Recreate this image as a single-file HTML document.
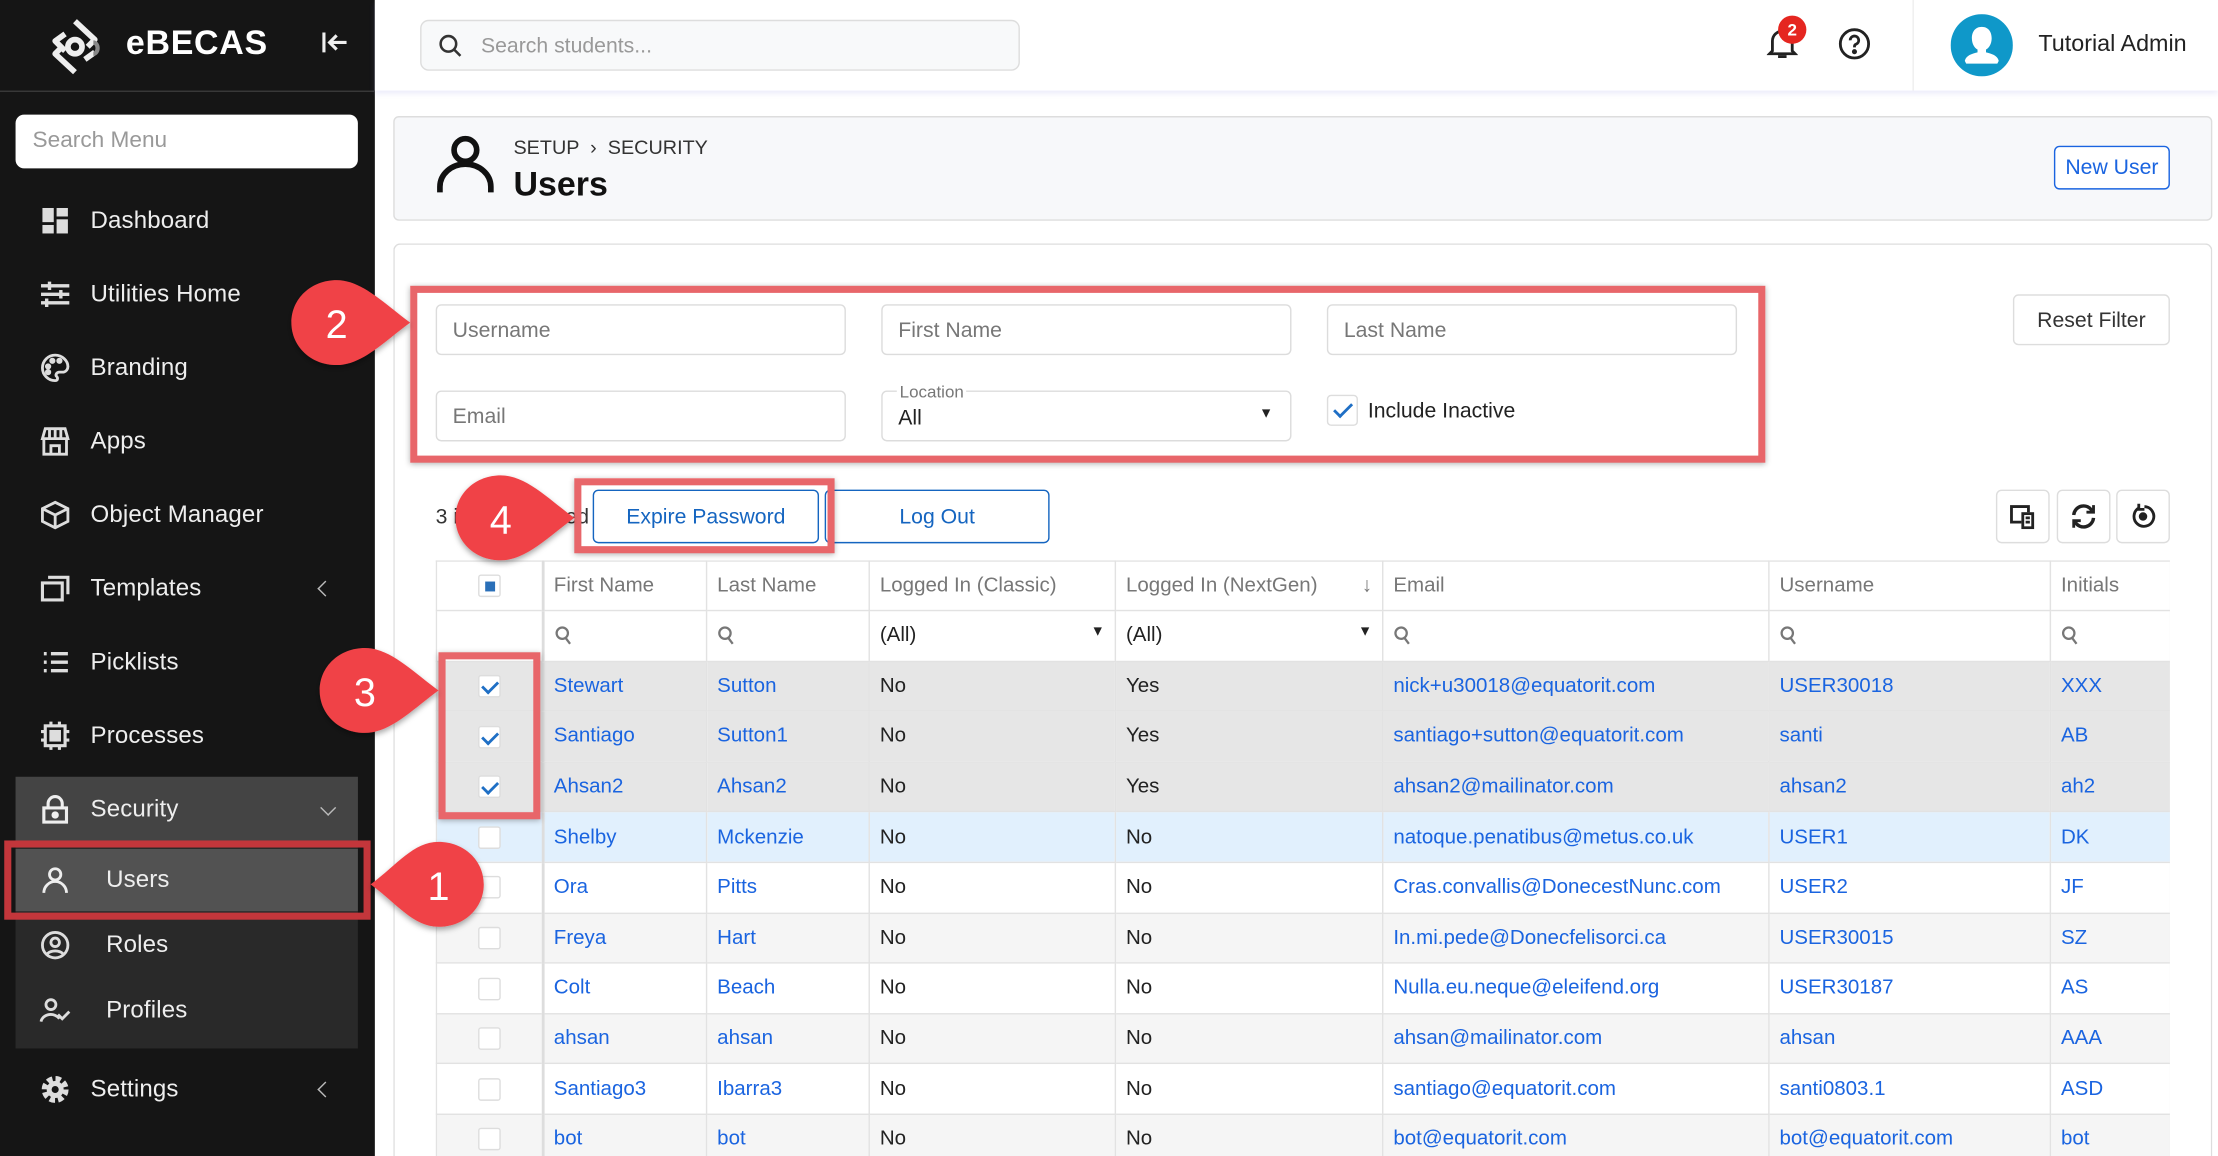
<!DOCTYPE html>
<html><head><meta charset="utf-8">
<style>
*{box-sizing:border-box;margin:0;padding:0}
html,body{width:2218px;height:1156px;overflow:hidden;background:#fff}
#w{position:relative;width:2218px;height:1156px;overflow:hidden}
#s{position:absolute;left:0;top:0;width:1568px;height:817px;overflow:hidden;transform:scale(1.41454,1.41493);transform-origin:0 0;font-family:"Liberation Sans",sans-serif;color:#222}
.a{position:absolute}
.side{left:0;top:0;width:265px;height:817px;background:#151515}
.mi{position:absolute;left:28px;height:24px;display:flex;align-items:center;color:#eee;font-size:17px;letter-spacing:.1px}
.mi svg{width:22px;height:22px;margin-right:14px;flex:none}
.chev{position:absolute;left:226px;width:8px;height:8px;border-left:1.5px solid #bbb;border-bottom:1.5px solid #bbb;transform:rotate(45deg)}
.inp{position:absolute;border:1px solid #dcdcdc;border-radius:4px;height:36px;background:#fff;color:#777;font-size:15px;padding:9px 11px}
.btn{position:absolute;border:1px solid #1565c0;border-radius:4px;color:#1565c0;font-size:15px;display:flex;align-items:center;justify-content:center;background:#fff}
.gb{position:absolute;border:1px solid #ddd;border-radius:4px;background:#fff;display:flex;align-items:center;justify-content:center}
.red{position:absolute;border:5px solid #e8666a;box-shadow:0 1px 4px rgba(0,0,0,.3)}
#tw{position:absolute;left:308px;top:396px;width:1226px;height:421px;overflow:hidden}
table{border-collapse:collapse;font-size:14.5px;width:1226px;table-layout:fixed}
td{border:1px solid #e2e2e2;height:35.6px;padding:0 7px;white-space:nowrap;overflow:hidden}
th{border:1px solid #e2e2e2;height:35px;padding:0 7px;text-align:left;font-weight:normal;color:#777}
td.c{text-align:center;border-right:2px solid #ddd;padding:0}
tr.sel td{background:#e6e6e6}
tr.hl td{background:#e1f0fd}
tr.z td{background:#f5f5f5}
.l{color:#1a64e0}
.cb{display:inline-block;width:16px;height:16px;border:1px solid #ddd;border-radius:2px;background:#fff;vertical-align:middle;position:relative}
.cb.k::after{content:"";position:absolute;left:4px;top:1px;width:5px;height:9px;border:solid #1f6fc5;border-width:0 2px 2px 0;transform:rotate(45deg)}
.mg{display:inline-block;width:12px;height:14px;vertical-align:middle}
</style></head><body><div id="w"><div id="s">
<div class="a side"></div>
<svg class="a" style="left:32px;top:12px" width="42" height="42" viewBox="0 0 42 42"><g fill="none" stroke="#eee" stroke-width="4" stroke-linejoin="round"><path d="M21 3 L35 16 L30 21"/><path d="M21 39 L7 26 L12 21"/><path d="M14 12 L7 17 L14 24"/><path d="M28 30 L35 25"/><circle cx="21" cy="21" r="5"/></g><path d="M34 18 a3 4 0 0 1 0 8" stroke="#888" stroke-width="3" fill="none"/></svg>
<div class="a" style="left:89px;top:17px;color:#fff;font-size:24px;font-weight:bold;letter-spacing:.5px">eBECAS</div>
<svg class="a" style="left:227px;top:21px" width="20" height="18" viewBox="0 0 20 18" fill="none" stroke="#eee" stroke-width="2.2"><path d="M2 2V16M18 9H7M11 4L6 9L11 14"/></svg>
<div class="a" style="left:0;top:64px;width:265px;height:1px;background:#3a3a3a"></div>
<div class="a" style="left:11px;top:81px;width:242px;height:38px;background:#fff;border-radius:6px;color:#999;font-size:16px;padding:10px 12px">Search Menu</div>
<div class="a" style="left:11px;top:549px;width:242px;height:192px;background:#292929"></div>
<div class="a" style="left:11px;top:549px;width:242px;height:49px;background:#444"></div>
<div class="a" style="left:11px;top:600px;width:242px;height:44px;background:#525252"></div>
<div class="a" style="left:3px;top:594px;width:259px;height:56px;border:5px solid #c3363b"></div>
<div class="mi" style="top:144px"><svg viewBox="0 0 22 22" fill="#ddd"><rect x="2" y="2" width="8" height="10"/><rect x="12" y="2" width="8" height="6"/><rect x="2" y="14" width="8" height="6"/><rect x="12" y="10" width="8" height="10"/></svg>Dashboard</div>
<div class="mi" style="top:196px"><svg viewBox="0 0 22 22" stroke="#ddd" stroke-width="2.4"><path d="M1 5H21M1 11H21M1 17H21M7 2V8M15 8V14M5 14V20"/></svg>Utilities Home</div>
<div class="mi" style="top:248px"><svg viewBox="0 0 22 22" fill="none" stroke="#ddd" stroke-width="2"><path d="M11 2a9 9 0 1 0 0 18c2 0 2-2 1-3s0-3 2-3h3a4 4 0 0 0 3-4c0-4-4-8-9-8z"/><circle cx="6" cy="10" r="1.2" fill="#ddd"/><circle cx="9" cy="6" r="1.2" fill="#ddd"/><circle cx="14" cy="6" r="1.2" fill="#ddd"/><circle cx="6" cy="14" r="1.2" fill="#ddd"/></svg>Branding</div>
<div class="mi" style="top:300px"><svg viewBox="0 0 22 22" fill="none" stroke="#ddd" stroke-width="2"><path d="M3 9V20H19V9M2 9L4 2H18L20 9ZM8 20V14H14V20M7 2V9M15 2V9M11 2V9"/></svg>Apps</div>
<div class="mi" style="top:352px"><svg viewBox="0 0 22 22" fill="none" stroke="#ddd" stroke-width="2"><path d="M11 2L20 6.5V15.5L11 20L2 15.5V6.5ZM2 6.5L11 11L20 6.5M11 11V20"/></svg>Object Manager</div>
<div class="mi" style="top:404px"><svg viewBox="0 0 22 22" fill="none" stroke="#ddd" stroke-width="2.2"><rect x="2" y="7" width="14" height="12"/><path d="M6 3H20V15"/></svg>Templates</div><div class="chev" style="top:412px"></div>
<div class="mi" style="top:456px"><svg viewBox="0 0 22 22" stroke="#ddd" stroke-width="2.4"><path d="M3 5H5M8 5H20M3 11H5M8 11H20M3 17H5M8 17H20"/></svg>Picklists</div>
<div class="mi" style="top:508px"><svg viewBox="0 0 22 22" fill="none" stroke="#ddd" stroke-width="2.2"><rect x="4" y="4" width="14" height="14"/><rect x="8" y="8" width="6" height="6" fill="#ddd"/><path d="M8 1V4M14 1V4M8 18V21M14 18V21M1 8H4M1 14H4M18 8H21M18 14H21"/></svg>Processes</div>
<div class="mi" style="top:560px"><svg viewBox="0 0 22 22" fill="none" stroke="#eee" stroke-width="2.2"><rect x="3" y="10" width="16" height="10"/><path d="M6 10V7a5 5 0 0 1 10 0v3"/><circle cx="11" cy="15" r="1.5" fill="#eee"/></svg>Security</div><div class="chev" style="top:567px;left:228px;transform:rotate(-45deg)"></div>
<div class="mi" style="top:610px"><svg viewBox="0 0 22 22" fill="none" stroke="#eee" stroke-width="2"><circle cx="11" cy="7" r="4"/><path d="M3 20a8 8 0 0 1 16 0"/></svg><span style="margin-left:11px">Users</span></div>
<div class="mi" style="top:656px"><svg viewBox="0 0 22 22" fill="none" stroke="#ddd" stroke-width="2"><circle cx="11" cy="11" r="9"/><circle cx="11" cy="9" r="3"/><path d="M5.5 17a7 5 0 0 1 11 0"/></svg><span style="margin-left:11px">Roles</span></div>
<div class="mi" style="top:702px"><svg viewBox="0 0 22 22" fill="none" stroke="#ddd" stroke-width="2"><circle cx="8" cy="7" r="3.5"/><path d="M1 19a7 6 0 0 1 13-2M13 14l3 3 5-5"/></svg><span style="margin-left:11px">Profiles</span></div>
<div class="mi" style="top:758px"><svg viewBox="0 0 22 22"><circle cx="11" cy="11" r="7" fill="none" stroke="#ddd" stroke-width="5" stroke-dasharray="3.5 2"/><circle cx="11" cy="11" r="6" fill="#ddd"/><circle cx="11" cy="11" r="2.5" fill="#151515"/></svg>Settings</div><div class="chev" style="top:766px"></div>

<div class="a" style="left:265px;top:0;width:1303px;height:64px;background:#fff;box-shadow:0 2px 4px rgba(120,120,220,.15)"></div>
<div class="a" style="left:297px;top:14px;width:424px;height:36px;background:#f8f9fa;border:1px solid #ddd;border-radius:6px"></div>
<svg class="a" style="left:310px;top:24px" width="17" height="17" viewBox="0 0 17 17" fill="none" stroke="#333" stroke-width="1.8"><circle cx="7" cy="7" r="5.5"/><path d="M11 11L15.5 15.5"/></svg>
<div class="a" style="left:340px;top:24px;color:#999;font-size:15px">Search students...</div>
<svg class="a" style="left:1249px;top:19px" width="22" height="24" viewBox="0 0 22 24" fill="none" stroke="#222" stroke-width="2"><path d="M4 17V10a7 7 0 0 1 14 0v7l2 2H2z"/><path d="M8 21h6"/></svg>
<div class="a" style="left:1257px;top:11px;width:20px;height:20px;border-radius:50%;background:#e52620;color:#fff;font-size:12px;font-weight:bold;text-align:center;line-height:20px">2</div>
<svg class="a" style="left:1299px;top:19px" width="24" height="24" viewBox="0 0 24 24" fill="none" stroke="#222" stroke-width="2"><circle cx="12" cy="12" r="10"/><path d="M9 9.5a3 3 0 1 1 4 2.8c-1 .4-1 1-1 2.2"/><circle cx="12" cy="17.5" r=".8" fill="#222"/></svg>
<div class="a" style="left:1352px;top:0;width:1px;height:64px;background:#eee"></div>
<svg class="a" style="left:1379px;top:10px" width="44" height="44" viewBox="0 0 44 44"><circle cx="22" cy="22" r="22" fill="#0f98c9"/><path d="M22 9c5 0 7 4 7 8s-2 7-4 8v2c4 1 8 2 9 6l-1 2H11l-1-2c1-4 5-5 9-6v-2c-2-1-4-4-4-8s2-8 7-8z" fill="#fff"/></svg>
<div class="a" style="left:1441px;top:22px;font-size:16.5px;color:#222">Tutorial Admin</div>

<div class="a" style="left:278px;top:82px;width:1286px;height:74px;background:#f7f8fa;border:1px solid #ddd;border-radius:4px"></div>
<svg class="a" style="left:308px;top:94px" width="42" height="44" viewBox="0 0 42 44" fill="none" stroke="#111" stroke-width="4"><circle cx="21" cy="12" r="8"/><path d="M3 42V38a18 16 0 0 1 36 0v4"/></svg>
<div class="a" style="left:363px;top:96px;font-size:14px;color:#333">SETUP &nbsp;›&nbsp; SECURITY</div>
<div class="a" style="left:363px;top:117px;font-size:24px;font-weight:bold;color:#111">Users</div>
<div class="btn" style="left:1452px;top:103px;width:82px;height:31px;color:#1a64e0;border-color:#1a64e0">New User</div>

<div class="a" style="left:278px;top:172px;width:1286px;height:645px;background:#fff;border:1px solid #ddd;border-bottom:none;border-radius:5px 5px 0 0"></div>
<div class="inp" style="left:308px;top:215px;width:290px">Username</div>
<div class="inp" style="left:623px;top:215px;width:290px">First Name</div>
<div class="inp" style="left:938px;top:215px;width:290px">Last Name</div>
<div class="inp" style="left:308px;top:276px;width:290px">Email</div>
<div class="inp" style="left:623px;top:276px;width:290px;color:#222;padding-top:10px">All<span style="position:absolute;left:10px;top:-7px;background:#fff;font-size:12px;color:#777;padding:0 2px">Location</span><span style="position:absolute;right:12px;top:10px;font-size:10px">▼</span></div>
<div class="a" style="left:938px;top:279px;width:22px;height:22px;border:1px solid #ddd;border-radius:3px"></div>
<div class="a" style="left:946px;top:282px;width:7px;height:13px;border:solid #1f6fc5;border-width:0 2px 2px 0;transform:rotate(45deg)"></div>
<div class="a" style="left:967px;top:282px;font-size:15px;color:#222">Include Inactive</div>
<div class="gb" style="left:1423px;top:208px;width:111px;height:36px;font-size:15px;color:#333">Reset Filter</div>
<div class="red" style="left:290px;top:202px;width:958px;height:125px"></div>

<div class="a" style="left:308px;top:357px;font-size:15px;color:#333">3 items selected</div>
<div class="btn" style="left:419px;top:346px;width:160px;height:38px">Expire Password</div>
<div class="btn" style="left:583px;top:346px;width:159px;height:38px">Log Out</div>
<div class="red" style="left:406px;top:338px;width:184px;height:53px"></div>
<div class="gb" style="left:1411px;top:346px;width:38px;height:38px"><svg width="20" height="18" viewBox="0 0 20 18" fill="none" stroke="#222" stroke-width="2"><path d="M9 13H2V2H14V6"/><rect x="10" y="7" width="7" height="10"/><path d="M12 10h3M12 13h3"/></svg></div>
<div class="gb" style="left:1454px;top:346px;width:38px;height:38px"><svg width="20" height="20" viewBox="0 0 20 20" fill="none" stroke="#222" stroke-width="2.4"><path d="M3 9a7 7 0 0 1 13-3M17 11a7 7 0 0 1-13 3"/><path d="M17 2v5h-5M3 18v-5h5" stroke-width="2"/></svg></div>
<div class="gb" style="left:1496px;top:346px;width:38px;height:38px"><svg width="20" height="20" viewBox="0 0 20 20" fill="none" stroke="#222" stroke-width="2"><path d="M7 4a7 7 0 1 0 4-1"/><path d="M7 1v4h4"/><circle cx="10" cy="10" r="2" fill="#222"/></svg></div>

<div id="tw"><table>
<colgroup><col style="width:75px"><col style="width:116px"><col style="width:115px"><col style="width:174px"><col style="width:189px"><col style="width:273px"><col style="width:199px"><col style="width:85px"></colgroup>
<tr><th style="text-align:center;border-right:2px solid #ddd"><span class="cb"><span style="position:absolute;left:4px;top:4px;width:7px;height:7px;background:#2a6fb8"></span></span></th><th>First Name</th><th>Last Name</th><th>Logged In (Classic)</th><th>Logged In (NextGen)<span style="float:right;color:#777">↓</span></th><th>Email</th><th>Username</th><th>Initials</th></tr>
<tr style="color:#777"><td class="c"></td><td><svg class="mg" viewBox="0 0 12 14" fill="none" stroke="#777" stroke-width="1.6"><circle cx="5.5" cy="5.5" r="4"/><path d="M8 9l3 4"/></svg></td><td><svg class="mg" viewBox="0 0 12 14" fill="none" stroke="#777" stroke-width="1.6"><circle cx="5.5" cy="5.5" r="4"/><path d="M8 9l3 4"/></svg></td><td style="color:#222">(All)<span style="float:right;font-size:10px">▼</span></td><td style="color:#222">(All)<span style="float:right;font-size:10px">▼</span></td><td><svg class="mg" viewBox="0 0 12 14" fill="none" stroke="#777" stroke-width="1.6"><circle cx="5.5" cy="5.5" r="4"/><path d="M8 9l3 4"/></svg></td><td><svg class="mg" viewBox="0 0 12 14" fill="none" stroke="#777" stroke-width="1.6"><circle cx="5.5" cy="5.5" r="4"/><path d="M8 9l3 4"/></svg></td><td><svg class="mg" viewBox="0 0 12 14" fill="none" stroke="#777" stroke-width="1.6"><circle cx="5.5" cy="5.5" r="4"/><path d="M8 9l3 4"/></svg></td></tr>
<tr class="sel"><td class="c"><span class="cb k"></span></td><td class="l">Stewart</td><td class="l">Sutton</td><td>No</td><td>Yes</td><td class="l">nick+u30018@equatorit.com</td><td class="l">USER30018</td><td class="l">XXX</td></tr>
<tr class="sel"><td class="c"><span class="cb k"></span></td><td class="l">Santiago</td><td class="l">Sutton1</td><td>No</td><td>Yes</td><td class="l">santiago+sutton@equatorit.com</td><td class="l">santi</td><td class="l">AB</td></tr>
<tr class="sel"><td class="c"><span class="cb k"></span></td><td class="l">Ahsan2</td><td class="l">Ahsan2</td><td>No</td><td>Yes</td><td class="l">ahsan2@mailinator.com</td><td class="l">ahsan2</td><td class="l">ah2</td></tr>
<tr class="hl"><td class="c"><span class="cb"></span></td><td class="l">Shelby</td><td class="l">Mckenzie</td><td>No</td><td>No</td><td class="l">natoque.penatibus@metus.co.uk</td><td class="l">USER1</td><td class="l">DK</td></tr>
<tr><td class="c"><span class="cb"></span></td><td class="l">Ora</td><td class="l">Pitts</td><td>No</td><td>No</td><td class="l">Cras.convallis@DonecestNunc.com</td><td class="l">USER2</td><td class="l">JF</td></tr>
<tr class="z"><td class="c"><span class="cb"></span></td><td class="l">Freya</td><td class="l">Hart</td><td>No</td><td>No</td><td class="l">In.mi.pede@Donecfelisorci.ca</td><td class="l">USER30015</td><td class="l">SZ</td></tr>
<tr><td class="c"><span class="cb"></span></td><td class="l">Colt</td><td class="l">Beach</td><td>No</td><td>No</td><td class="l">Nulla.eu.neque@eleifend.org</td><td class="l">USER30187</td><td class="l">AS</td></tr>
<tr class="z"><td class="c"><span class="cb"></span></td><td class="l">ahsan</td><td class="l">ahsan</td><td>No</td><td>No</td><td class="l">ahsan@mailinator.com</td><td class="l">ahsan</td><td class="l">AAA</td></tr>
<tr><td class="c"><span class="cb"></span></td><td class="l">Santiago3</td><td class="l">Ibarra3</td><td>No</td><td>No</td><td class="l">santiago@equatorit.com</td><td class="l">santi0803.1</td><td class="l">ASD</td></tr>
<tr class="z"><td class="c"><span class="cb"></span></td><td class="l">bot</td><td class="l">bot</td><td>No</td><td>No</td><td class="l">bot@equatorit.com</td><td class="l">bot@equatorit.com</td><td class="l">bot</td></tr>
</table></div>
<div class="red" style="left:310px;top:461px;width:72px;height:118px"></div>

<svg class="a" style="left:200px;top:195px;overflow:visible" width="100" height="70"><defs><filter id="sh"><feDropShadow dx="0" dy="2" stdDeviation="2" flood-opacity=".35"/></filter></defs><path d="M38 3 C56 3 72 20 90 33 C72 46 56 63 38 63 C20 63 6 50 6 33 C6 16 20 3 38 3Z" fill="#f04347" filter="url(#sh)"/><text x="38" y="44" fill="#fff" font-size="28" text-anchor="middle" font-family="Liberation Sans">2</text></svg>
<svg class="a" style="left:222px;top:455px;overflow:visible" width="100" height="70"><path d="M36 3 C54 3 70 20 88 33 C70 46 54 63 36 63 C18 63 4 50 4 33 C4 16 18 3 36 3Z" fill="#f04347" filter="url(#sh)"/><text x="36" y="44" fill="#fff" font-size="28" text-anchor="middle" font-family="Liberation Sans">3</text></svg>
<svg class="a" style="left:318px;top:333px;overflow:visible" width="100" height="70"><path d="M36 3 C54 3 70 20 88 33 C70 46 54 63 36 63 C18 63 4 50 4 33 C4 16 18 3 36 3Z" fill="#f04347" filter="url(#sh)"/><text x="36" y="44" fill="#fff" font-size="28" text-anchor="middle" font-family="Liberation Sans">4</text></svg>
<svg class="a" style="left:262px;top:592px;overflow:visible" width="100" height="70"><path d="M48 3 C30 3 18 20 0 33 C18 46 30 63 48 63 C66 63 80 50 80 33 C80 16 66 3 48 3Z" fill="#f04347" filter="url(#sh)"/><text x="48" y="44" fill="#fff" font-size="28" text-anchor="middle" font-family="Liberation Sans">1</text></svg>
</div></div></body></html>
